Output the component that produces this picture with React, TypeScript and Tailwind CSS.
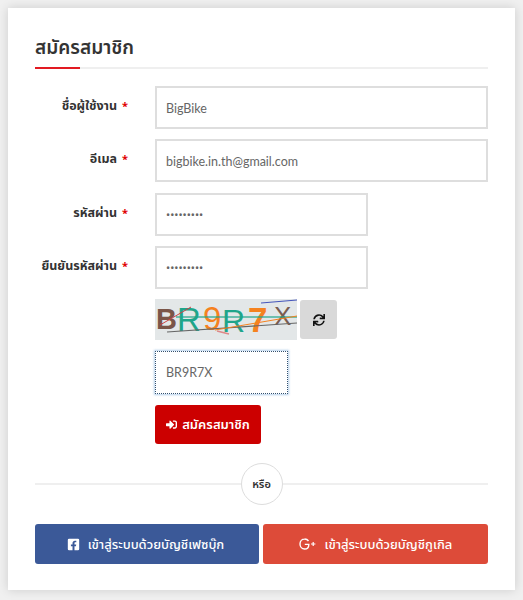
// App.tsx
import React from 'react';
import { FaFacebookSquare, FaSignInAlt, FaSync } from 'react-icons/fa';

const thaiFont = "font-['Noto_Sans','Noto_Sans_Thai','DejaVu_Sans',sans-serif]";
const inputFont = "font-['Lato','Noto_Sans',sans-serif]";
const dotsFont = "font-['Noto_Sans',sans-serif]";

interface FieldProps {
  label: string;
  value: string;
  wide?: boolean;
  secret?: boolean;
}

const Field = ({ label, value, wide, secret }: FieldProps) => (
  <div className="flex items-start mb-[10.33px]">
    <label className="flex w-[93px] shrink-0 justify-end gap-[5px] pt-[10px] text-[12.5px] leading-[20px] font-bold text-[#333] whitespace-nowrap">
      {label}
      <span className="text-[11px] text-[#e00000]">*</span>
    </label>
    <input
      readOnly
      value={value}
      className={`ml-[27px] h-[43px] border-2 border-[#dedede] bg-white px-[9px] text-[#666] outline-none ${secret ? `text-[11px] ${dotsFont}` : `pt-[2px] text-[12.5px] ${inputFont}`} ${wide ? 'w-[333px]' : 'w-[213px]'}`}
    />
  </div>
);

const Captcha = () => (
  <svg width="142" height="41" viewBox="0 0 142 41" className="block bg-[#e3e7e8]">
    <g fontFamily="Liberation Sans, sans-serif">
      <text x="1" y="30" fill="#7a5548" fontSize="29" fontWeight="700">B</text>
      <text x="22" y="32" fill="#1fa58a" fontSize="33">R</text>
      <text x="48" y="31" fill="#f5821f" fontSize="33">9</text>
      <text x="67" y="33" fill="#1fa58a" fontSize="32">R</text>
      <text x="93" y="33" fill="#f5821f" fontSize="35" fontWeight="700">7</text>
      <text x="119" y="26" fill="#7a5c50" fontSize="26">X</text>
    </g>
    <path d="M21 18L142 18" stroke="#1fa58a" strokeWidth="2" opacity=".6" />
    <path d="M12 33L142 24" stroke="#666" strokeWidth="1.2" />
    <path d="M60 31L142 17" stroke="#f5821f" strokeWidth="1" />
    <path d="M106 4L142 1" stroke="#4455bb" strokeWidth="1" />
    <path d="M62 32L74 35" stroke="#d88" strokeWidth="1.5" />
    <path d="M5 26L36 8" stroke="#c44" strokeWidth="1" />
  </svg>
);

const GooglePlus = () => (
  <svg width="17" height="12" viewBox="0 0 17 12" fill="none" stroke="currentColor" className="shrink-0">
    <path d="M9.5 3A4.6 4.6 0 0 0 5.6 1 C3 1 1 3 1 6 s2 5 4.6 5 c2.6 0 4.2-1.8 4.2-4.6 H5.8" strokeWidth="1.4" />
    <path d="M12 6h4.4M14.2 3.9v4.2" strokeWidth="1.2" />
  </svg>
);

export default function App() {
  return (
    <div className={`min-h-[600px] bg-[#f0f0f0] p-2 ${thaiFont}`}>
      <div className="h-[582px] w-[507px] bg-white px-[27px] pt-[27px] shadow-[0_0_10px_rgba(0,0,0,0.15)]">
        <div className="relative h-[34px] border-b-2 border-[#efefef]">
          <h2 className="text-[19px] leading-[24px] font-semibold text-[#333]">สมัครสมาชิก</h2>
          <div className="absolute left-0 -bottom-[2px] h-[2px] w-[45px] bg-[#e21a22]" />
        </div>

        <form className="mt-[17px]">
          <Field label="ชื่อผู้ใช้งาน" value="BigBike" wide />
          <Field label="อีเมล" value="bigbike.in.th@gmail.com" wide />
          <Field label="รหัสผ่าน" value="•••••••••" secret />
          <Field label="ยืนยันรหัสผ่าน" value="•••••••••" secret />

          <div className="ml-[120px]">
            <div className="flex items-center">
              <Captcha />
              <button type="button" className="ml-[3px] flex h-[39px] w-[37px] items-center justify-center rounded-[3px] bg-[#d9d9d9] text-[#111]">
                <FaSync className="text-[12px]" />
              </button>
            </div>
            <input
              readOnly
              value="BR9R7X"
              className={`mt-[11px] block h-[43px] w-[133px] border border-dotted border-[#33506e] bg-white px-[10px] text-[12.5px] text-[#666] shadow-[0_0_2px_1px_rgba(90,150,210,0.45)] outline-none ${inputFont}`}
            />
            <button type="button" className="mt-[11px] flex h-[39px] w-[106px] items-center justify-center gap-[5px] rounded-[3px] bg-[#cc0000] text-[13px] font-semibold text-white">
              <FaSignInAlt className="text-[11px]" />
              สมัครสมาชิก
            </button>
          </div>
        </form>

        <div className="relative mt-[19px] flex h-[42px] items-center">
          <div className="h-[2px] w-full bg-[#efefef]" />
          <div className="absolute left-1/2 top-0 flex h-[42px] w-[42px] -translate-x-1/2 items-center justify-center rounded-full border border-[#dddddd] bg-white text-[11px] font-semibold text-[#333]">
            หรือ
          </div>
        </div>

        <div className="mt-[19px] flex gap-[4px]">
          <button type="button" className="flex h-[40px] w-[224px] items-center justify-center gap-[8px] rounded-[3px] bg-[#3b5998] pr-[3px] text-[13px] font-medium text-white">
            <FaFacebookSquare className="text-[13px]" />
            เข้าสู่ระบบด้วยบัญชีเฟซบุ๊ก
          </button>
          <button type="button" className="flex h-[40px] w-[225px] items-center justify-center gap-[9px] rounded-[3px] bg-[#dd4b39] text-[13px] font-medium text-white">
            <GooglePlus />
            เข้าสู่ระบบด้วยบัญชีกูเกิล
          </button>
        </div>
      </div>
    </div>
  );
}
